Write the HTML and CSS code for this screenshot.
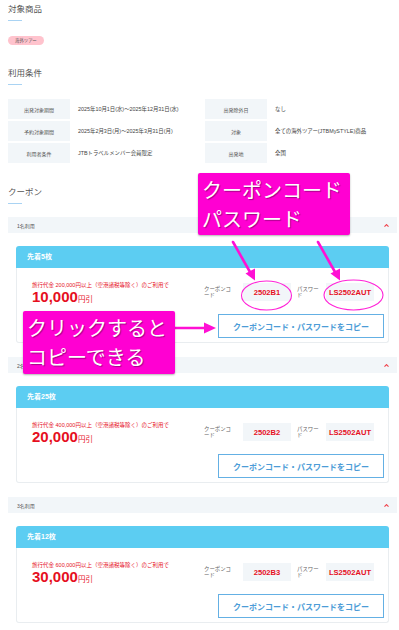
FILE: index.html
```html
<!DOCTYPE html>
<html lang="ja">
<head>
  <meta charset="UTF-8">
  <meta name="viewport" content="width=device-width, initial-scale=1.0">
  <link rel="stylesheet" href="styles.css">
  <title>クーポン</title>
</head>
<body>
  <div class="page">
    <h2 class="heading first">対象商品</h2>
    <span class="tag">海外ツアー</span>

    <h2 class="heading">利用条件</h2>
    <div class="terms">
      <div class="term-label">出発対象期間</div>
      <div class="term-value">2025年10月1日(水)〜2025年12月31日(水)</div>
      <div class="term-label">出発除外日</div>
      <div class="term-value">なし</div>
      <div class="term-label">予約対象期間</div>
      <div class="term-value">2025年2月3日(月)〜2025年3月31日(月)</div>
      <div class="term-label">対象</div>
      <div class="term-value">全ての海外ツアー(JTBMySTYLE)商品</div>
      <div class="term-label">利用者条件</div>
      <div class="term-value">JTBトラベルメンバー会員限定</div>
      <div class="term-label">出発地</div>
      <div class="term-value">全国</div>
    </div>

    <h2 class="heading coupon-title">クーポン</h2>

    <div class="group">
      <div class="group-head">
        <span>1名利用</span>
        <svg class="caret" width="5" height="3" viewBox="0 0 5 3"><polyline points="0.5,2.6 2.5,0.6 4.5,2.6" fill="none" stroke="#f0404a" stroke-width="1.1"/></svg>
      </div>
      <div class="card">
        <div class="card-head">先着5枚</div>
        <div class="card-body">
          <div class="card-row">
            <div class="discount">
              <p class="condition">旅行代金 200,000円以上（空港諸税等除く）のご利用で</p>
              <p class="amount"><strong>10,000</strong>円引</p>
            </div>
            <div class="codes">
              <span class="code-label">クーポンコード</span>
              <span class="code-box">2502B1</span>
              <span class="code-label pw">パスワード</span>
              <span class="code-box">LS2502AUT</span>
            </div>
          </div>
          <button class="copy">クーポンコード・パスワードをコピー</button>
        </div>
      </div>
    </div>

    <div class="group">
      <div class="group-head">
        <span>2名利用</span>
        <svg class="caret" width="5" height="3" viewBox="0 0 5 3"><polyline points="0.5,2.6 2.5,0.6 4.5,2.6" fill="none" stroke="#f0404a" stroke-width="1.1"/></svg>
      </div>
      <div class="card">
        <div class="card-head">先着25枚</div>
        <div class="card-body">
          <div class="card-row">
            <div class="discount">
              <p class="condition">旅行代金 400,000円以上（空港諸税等除く）のご利用で</p>
              <p class="amount"><strong>20,000</strong>円引</p>
            </div>
            <div class="codes">
              <span class="code-label">クーポンコード</span>
              <span class="code-box">2502B2</span>
              <span class="code-label pw">パスワード</span>
              <span class="code-box">LS2502AUT</span>
            </div>
          </div>
          <button class="copy">クーポンコード・パスワードをコピー</button>
        </div>
      </div>
    </div>

    <div class="group">
      <div class="group-head">
        <span>3名利用</span>
        <svg class="caret" width="5" height="3" viewBox="0 0 5 3"><polyline points="0.5,2.6 2.5,0.6 4.5,2.6" fill="none" stroke="#f0404a" stroke-width="1.1"/></svg>
      </div>
      <div class="card">
        <div class="card-head">先着12枚</div>
        <div class="card-body">
          <div class="card-row">
            <div class="discount">
              <p class="condition">旅行代金 600,000円以上（空港諸税等除く）のご利用で</p>
              <p class="amount"><strong>30,000</strong>円引</p>
            </div>
            <div class="codes">
              <span class="code-label">クーポンコード</span>
              <span class="code-box">2502B3</span>
              <span class="code-label pw">パスワード</span>
              <span class="code-box">LS2502AUT</span>
            </div>
          </div>
          <button class="copy">クーポンコード・パスワードをコピー</button>
        </div>
      </div>
    </div>

    <!-- annotations drawn over the screenshot -->
    <svg class="marks" width="399" height="630" viewBox="0 0 399 630">
      <g fill="none" stroke="#ff22d8" stroke-width="1.1">
        <ellipse cx="266.5" cy="292.5" rx="25" ry="14.5"/>
        <ellipse cx="353.5" cy="292" rx="29.5" ry="15"/>
      </g>
      <g stroke="#ff10d4" stroke-width="2.6" stroke-linecap="round">
        <line x1="233" y1="239" x2="250" y2="269"/>
        <line x1="318" y1="239" x2="335" y2="269"/>
        <line x1="175" y1="325" x2="206" y2="325"/>
      </g>
      <g fill="#ff10d4">
        <polygon points="255,277.5 255,265.5 245.5,270.5"/>
        <polygon points="340,277.5 340,265.5 330.5,270.5"/>
        <polygon points="216,325 204,319.5 204,330.5"/>
      </g>
    </svg>
    <div class="note note-code">クーポンコード<br>パスワード</div>
    <div class="note note-copy">クリックすると<br>コピーできる</div>
  </div>
</body>
</html>
```

FILE: styles.css
```css
body {
  margin: 0;
  background: #fff;
  font-family: "Liberation Sans", "Noto Sans CJK JP", sans-serif;
  color: #333;
}

.page {
  position: relative;
  width: 389px;
  padding: 0 2px 20px 8px;
}

p {
  margin: 0;
}

.heading {
  margin: 22px 0 0;
  font-size: 8.5px;
  line-height: 12px;
  font-weight: normal;
  color: #555;
}

.heading::after {
  content: "";
  display: block;
  width: 14px;
  height: 1px;
  margin-top: 5px;
  background: #a9d3f3;
}

.heading.first {
  margin-top: 3px;
}

.heading.coupon-title {
  margin-top: 23px;
}

.tag {
  display: inline-block;
  margin-top: 15px;
  padding: 0 7px;
  height: 9px;
  line-height: 9px;
  border-radius: 5px;
  background: #ffc3cd;
  font-size: 4.4px;
  color: #555;
  vertical-align: top;
}

/* conditions table */
.terms {
  display: grid;
  grid-template-columns: 62px 135px 62px 1fr;
  grid-auto-rows: 20px;
  row-gap: 2px;
  margin-top: 14px;
}

.term-label {
  display: flex;
  align-items: center;
  justify-content: center;
  background: #f2f6f9;
  font-size: 5px;
  color: #555;
}

.term-value {
  display: flex;
  align-items: center;
  padding-left: 8px;
  font-size: 5.4px;
  color: #444;
}

/* coupon groups */
.group {
  margin-top: 13px;
}

.group + .group {
  margin-top: 14px;
}

.group-head {
  display: flex;
  align-items: center;
  justify-content: space-between;
  height: 16px;
  padding: 0 8px 0 9px;
  background: #f2f6f9;
  font-size: 5px;
  color: #555;
}

.caret {
  display: block;
}

.card {
  margin: 13px 8px 0;
}

.card-head {
  height: 22px;
  line-height: 22px;
  padding-left: 11px;
  background: #5ccdf2;
  border-radius: 3px 3px 0 0;
  color: #fff;
  font-size: 7px;
  font-weight: bold;
}

.card-body {
  display: flex;
  flex-direction: column;
  align-items: flex-end;
  padding: 15px 4px 4px 15px;
  border: 1px solid #e9edf0;
  border-top: none;
  border-radius: 0 0 3px 3px;
}

.card-row {
  display: flex;
  align-items: flex-start;
  justify-content: space-between;
  width: 100%;
  height: 18px;
  padding-right: 10px;
  box-sizing: border-box;
}

.discount {
  margin-top: -1px;
  color: #e60f1e;
}

.condition {
  font-size: 5.5px;
  line-height: 7px;
}

.amount {
  font-size: 7.5px;
  line-height: 16px;
}

.amount strong {
  font-size: 15px;
}

.codes {
  display: flex;
  align-items: center;
}

.code-label {
  width: 30px;
  margin-right: 9px;
  font-size: 5.4px;
  line-height: 6px;
  color: #666;
}

.code-label.pw {
  width: 23px;
  margin: 0 6px;
}

.code-box {
  display: flex;
  align-items: center;
  justify-content: center;
  width: 48px;
  height: 18px;
  background: #f2f6f9;
  color: #e60f1e;
  font-size: 7.6px;
  font-weight: bold;
}

.copy {
  width: 166px;
  height: 24px;
  margin-top: 13px;
  padding: 0;
  background: #fff;
  border: 1px solid #64b0e4;
  color: #4c9cd7;
  font-family: "Liberation Sans", "Noto Sans CJK JP", sans-serif;
  font-size: 8px;
  font-weight: bold;
}

/* overlay annotations */
.marks {
  position: absolute;
  top: 0;
  left: 0;
  pointer-events: none;
}

.note {
  position: absolute;
  box-sizing: border-box;
  padding: 2px 0 0 4px;
  background: #ff00d2;
  border-radius: 2px;
  box-shadow: 0 1px 2px rgba(0, 0, 0, 0.3);
  color: #fff;
  font-family: "Noto Sans CJK JP", sans-serif;
  font-size: 20px;
  line-height: 29px;
  text-shadow: 1px 1px 1px rgba(0, 0, 0, 0.35);
  white-space: nowrap;
}

.note-code {
  top: 170px;
  left: 198px;
  width: 152px;
  height: 62px;
}

.note-copy {
  top: 308px;
  left: 23px;
  width: 152px;
  height: 63px;
}
```
